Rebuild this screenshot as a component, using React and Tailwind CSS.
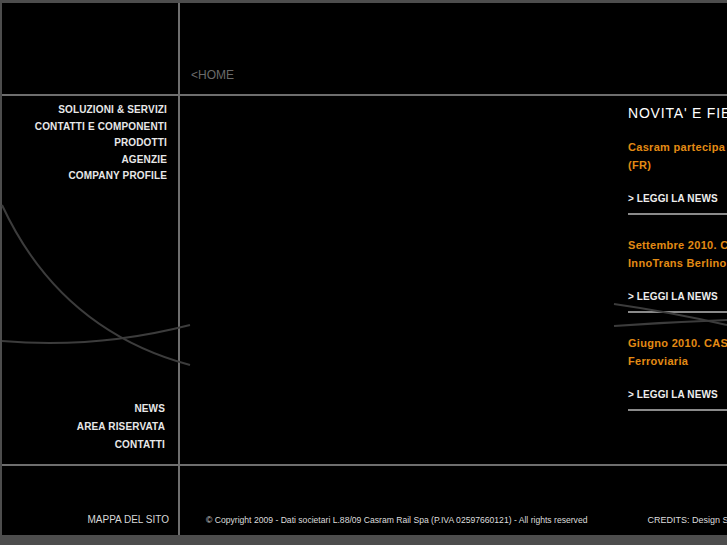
import React from 'react';

const topMenu = ['SOLUZIONI & SERVIZI', 'CONTATTI E COMPONENTI', 'PRODOTTI', 'AGENZIE', 'COMPANY PROFILE'];
const bottomMenu = ['NEWS', 'AREA RISERVATA', 'CONTATTI'];

const news = [
  ['Casram partecipa a Rail Expo 2010 a Parigi', '(FR)'],
  ['Settembre 2010. CASRAM RAIL presente a', 'InnoTrans Berlino'],
  ['Giugno 2010. CASRAM RAIL alla Fiera', 'Ferroviaria'],
];

const NewsItem = ({ lines, first }) => (
  <div className={first ? 'pt-[16px]' : 'pt-[21px]'}>
    <div className="text-[11px] leading-[18px] font-bold text-[#e38b14] whitespace-nowrap tracking-[0.3px]">
      {lines[0]}
      <br />
      {lines[1]}
    </div>
    <div className="mt-[18px] text-[10px] leading-[14px] font-bold text-[#eeeeee] tracking-[0.1px]">&gt; LEGGI LA NEWS</div>
    <div className="mt-[7px] h-[2px] bg-[#8a8a8a]" />
  </div>
);

const App = () => {
  return (
    <div
      className="relative w-[727px] h-[545px] overflow-hidden bg-[#4d4d4d]"
      style={{ fontFamily: '"Liberation Sans", Arial, sans-serif' }}
    >
      <div className="pt-[3px] pl-[2px] pb-[10px] w-[960px]">
        <div className="grid grid-cols-[176px_1fr] grid-rows-[91px_368px_69px] gap-[2px] bg-[#6e6e6e]">
          {/* top row */}
          <div className="bg-black" />
          <div className="bg-black flex items-end pl-[11px] pb-[12px]">
            <span className="text-[12px] leading-[14px] text-[#6a6a6a]">&lt;HOME</span>
          </div>

          {/* middle row */}
          <div className="bg-black flex flex-col justify-between items-end">
            <ul className="pt-[6px] pr-[11px] text-right text-[10px] leading-[16.5px] font-bold text-[#e8e8e8] tracking-[0.15px]">
              {topMenu.map((m) => (
                <li key={m}>{m}</li>
              ))}
            </ul>
            <ul className="pb-[10px] pr-[13px] text-right text-[10px] leading-[18px] font-bold text-[#e8e8e8] tracking-[0.15px]">
              {bottomMenu.map((m) => (
                <li key={m}>{m}</li>
              ))}
            </ul>
          </div>
          <div className="bg-black pl-[448px]">
            <div className="w-[300px] pt-[8px]">
              <h2 className="text-[14px] leading-[18px] text-white whitespace-nowrap tracking-[0.8px]">NOVITA' E FIERE</h2>
              {news.map((n, i) => (
                <NewsItem key={i} lines={n} first={i === 0} />
              ))}
            </div>
          </div>

          {/* bottom row */}
          <div className="bg-black flex items-end justify-end pr-[9px] pb-[9px]">
            <span className="text-[10px] leading-[12px] text-[#d8d8d8]">MAPPA DEL SITO</span>
          </div>
          <div className="bg-black flex items-end pb-[10px] pl-[26px]">
            <span className="text-[8.6px] leading-[10px] text-[#dddddd] whitespace-nowrap">
              © Copyright 2009 - Dati societari L.88/09 Casram Rail Spa (P.IVA 02597660121) - All rights reserved
            </span>
            <span className="ml-[60px] text-[9px] leading-[10px] text-[#dddddd] whitespace-nowrap">
              CREDITS: Design Studio
            </span>
          </div>
        </div>
      </div>

      {/* decorative curves */}
      <svg className="absolute inset-0 pointer-events-none" width="727" height="545" viewBox="0 0 727 545">
        <path d="M2 205 Q 60 330 190 365" fill="none" stroke="#3c3c3c" strokeWidth="2" />
        <path d="M2 341 C 60 346, 120 343, 190 325" fill="none" stroke="#3c3c3c" strokeWidth="2" />
        <path d="M614 304 Q 670 312, 727 325" fill="none" stroke="#3c3c3c" strokeWidth="2" />
        <path d="M614 326 Q 670 322, 727 320" fill="none" stroke="#3c3c3c" strokeWidth="2" />
      </svg>
    </div>
  );
};

export default App;
